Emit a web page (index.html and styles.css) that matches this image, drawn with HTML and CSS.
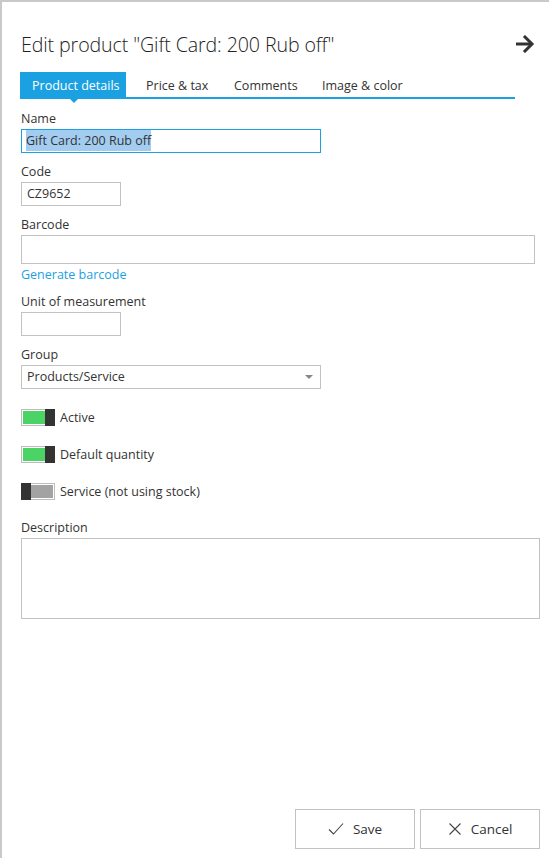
FILE: index.html
```html
<!DOCTYPE html>
<html lang="en">
<head>
<meta charset="utf-8">
<title>Edit product</title>
<link rel="stylesheet" href="styles.css">
</head>
<body>
<div class="panel">
  <div class="content">
    <div class="header">
      <h1 class="title">Edit product "Gift Card: 200 Rub off"</h1>
      <svg class="close-arrow" width="20" height="18" viewBox="0 0 20 18" aria-hidden="true">
        <path d="M1 9 H17" stroke="#333" stroke-width="3" fill="none"/>
        <path d="M10 2 L17 9 L10 16" stroke="#333" stroke-width="3" fill="none" stroke-linecap="square"/>
      </svg>
    </div>

    <div class="tabs">
      <div class="tab tab-active">Product details</div>
      <div class="tab tab-2">Price &amp; tax</div>
      <div class="tab tab-3">Comments</div>
      <div class="tab tab-4">Image &amp; color</div>
    </div>

    <div class="field">
      <div class="label">Name</div>
      <div class="input input-focus w300"><span class="selected">Gift Card: 200 Rub off</span></div>
    </div>

    <div class="field">
      <div class="label">Code</div>
      <div class="input w100">CZ9652</div>
    </div>

    <div class="field">
      <div class="label">Barcode</div>
      <div class="input input-tall wbar"></div>
      <a class="link">Generate barcode</a>
    </div>

    <div class="field">
      <div class="label">Unit of measurement</div>
      <div class="input w100"></div>
    </div>

    <div class="field">
      <div class="label">Group</div>
      <div class="input select w300">
        <span>Products/Service</span>
        <span class="caret"></span>
      </div>
    </div>

    <div class="toggles">
      <div class="toggle-row">
        <span class="toggle toggle-on"><span class="knob"></span></span>
        <span class="toggle-label">Active</span>
      </div>
      <div class="toggle-row">
        <span class="toggle toggle-on"><span class="knob"></span></span>
        <span class="toggle-label">Default quantity</span>
      </div>
      <div class="toggle-row">
        <span class="toggle toggle-off"><span class="knob"></span></span>
        <span class="toggle-label">Service (not using stock)</span>
      </div>
    </div>

    <div class="field">
      <div class="label">Description</div>
      <div class="textarea"></div>
    </div>
  </div>

  <div class="footer">
    <button class="btn">
      <svg width="16" height="14" viewBox="0 0 16 14" aria-hidden="true">
        <path d="M1 7.5 L5.5 12 L15 1.5" stroke="#444" stroke-width="1.1" fill="none"/>
      </svg>
      <span>Save</span>
    </button>
    <button class="btn">
      <svg width="14" height="14" viewBox="0 0 14 14" aria-hidden="true">
        <path d="M1.5 1.5 L12.5 12.5 M12.5 1.5 L1.5 12.5" stroke="#444" stroke-width="1.1" fill="none"/>
      </svg>
      <span>Cancel</span>
    </button>
  </div>
</div>
</body>
</html>
```
FILE: styles.css
```css
* { box-sizing: border-box; }

html, body {
  margin: 0;
  padding: 0;
  background: #fff;
}

body {
  font-family: "Open Sans", "Noto Sans", sans-serif;
  font-size: 12.5px;
  color: #333;
}

.panel {
  height: 858px;
  border-top: 2px solid #c9c9c9;
  border-left: 2px solid #c9c9c9;
  display: flex;
  flex-direction: column;
  padding: 0 9px 9px 19px;
}

.content {
  flex: 1;
  display: flex;
  flex-direction: column;
}

.header {
  display: flex;
  align-items: center;
  justify-content: space-between;
  height: 40px;
  margin-top: 22px;
  padding-right: 5px;
}

.title {
  margin: 0;
  font-weight: 300;
  font-size: 19.6px;
  color: #222;
  letter-spacing: -0.1px;
}

.close-arrow {
  display: block;
  margin-top: 0;
}

.tabs {
  display: flex;
  width: 495px;
  height: 27px;
  margin-top: 8px;
  margin-left: -1px;
  border-bottom: 2px solid #1ba1e2;
}

.tab {
  height: 25px;
  line-height: 27px;
  font-size: 12.5px;
  color: #333;
  padding-left: 13px;
  white-space: nowrap;
}

.tab-active {
  position: relative;
  width: 106px;
  padding-left: 12px;
  background: #1ba1e2;
  color: #fff;
}

.tab-active::after {
  content: "";
  position: absolute;
  left: 50px;
  bottom: -6px;
  border-left: 4px solid transparent;
  border-right: 4px solid transparent;
  border-top: 4px solid #1ba1e2;
}

.tab-2 { width: 88px; margin-left: 7px; }
.tab-3 { width: 88px; }
.tab-4 { width: 110px; }

.field {
  display: flex;
  flex-direction: column;
  align-items: flex-start;
  margin-top: 10px;
}

.tabs + .field { margin-top: 11px; }

.label {
  height: 19px;
  line-height: 18px;
}

.input {
  height: 24px;
  border: 1px solid #c2c2c2;
  padding: 0 5px;
  line-height: 22px;
  background: #fff;
  white-space: nowrap;
}

.input-focus {
  border-color: #1ba1e2;
  padding: 0 0 0 4px;
}

.selected {
  background: #a3cdf0;
  padding: 2px 0;
}

.w300 { width: 300px; }
.w100 { width: 100px; }
.wbar { width: 514px; }
.input-tall { height: 29px; }

.link {
  color: #1ba1e2;
  height: 19px;
  line-height: 21px;
  cursor: pointer;
}

.select {
  display: flex;
  align-items: center;
  justify-content: space-between;
  padding: 0 6px 0 5px;
}

.caret {
  width: 0;
  height: 0;
  border-left: 4px solid transparent;
  border-right: 4px solid transparent;
  border-top: 4px solid #888;
  margin-right: 1px;
}

.toggles {
  display: flex;
  flex-direction: column;
  gap: 20px;
  margin-top: 20px;
}

.toggle-row {
  display: flex;
  align-items: center;
  height: 17px;
}

.toggle {
  position: relative;
  display: block;
  width: 34px;
  height: 17px;
  border: 1px solid #bdbdbd;
  margin-right: 5px;
}

.toggle-on { background: #4cd366; box-shadow: inset 0 0 0 1px #fff; }
.toggle-off { background: #a3a3a3; box-shadow: inset 0 0 0 1px #fff; }

.knob {
  position: absolute;
  top: -1px;
  bottom: -1px;
  width: 10px;
  background: #333;
}

.toggle-on .knob { right: -1px; }
.toggle-off .knob { left: -1px; }

.toggle-label {
  line-height: 18px;
}

.toggles + .field { margin-top: 19px; }

.textarea {
  width: 519px;
  height: 81px;
  border: 1px solid #c2c2c2;
}

.footer {
  display: flex;
  justify-content: flex-end;
  gap: 5px;
}

.btn {
  display: flex;
  align-items: center;
  justify-content: center;
  gap: 9px;
  width: 120px;
  height: 40px;
  border: 1px solid #c2c2c2;
  background: #fff;
  font-family: "Open Sans", "Noto Sans", sans-serif;
  font-size: 13.5px;
  color: #333;
  padding: 0;
}

.btn svg { display: block; }
```
